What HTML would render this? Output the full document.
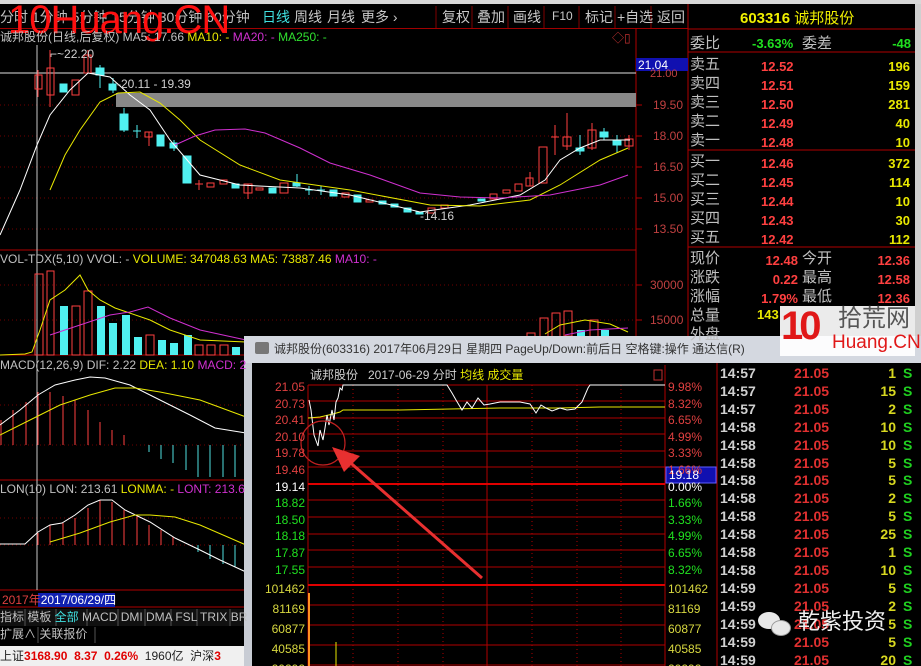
<!DOCTYPE html>
<html><head><meta charset="utf-8"><style>
*{margin:0;padding:0;box-sizing:border-box}
html,body{width:921px;height:666px;overflow:hidden}
body{background:#000;position:relative;font-family:"Liberation Sans","Noto Sans CJK SC",sans-serif;}
.a{position:absolute;white-space:nowrap;line-height:1}
.tb{font-size:14px;color:#c8c8c8}
.rp{font-size:15px}
.g{color:#c0c0c0}.r{color:#ff4040}.y{color:#e8e800}.gr{color:#20e020}
</style></head><body>
<svg class="a" style="left:0;top:0" width="921" height="666">
<rect x="0" y="0" width="921" height="4" fill="#d8d8d8"/>
<rect x="0" y="28" width="688" height="1" fill="#a00000"/>
<line x1="636" y1="28" x2="636" y2="590" stroke="#b00000"/>
<line x1="688" y1="4" x2="688" y2="340" stroke="#b00000"/>
<line x1="688" y1="29" x2="921" y2="29" stroke="#b00000"/>
<line x1="688" y1="52" x2="921" y2="52" stroke="#b00000"/>
<line x1="688" y1="150" x2="921" y2="150" stroke="#b00000"/>
<line x1="688" y1="247" x2="921" y2="247" stroke="#b00000"/>
<rect x="915" y="4" width="6" height="336" fill="#d0d0d0"/>
<g stroke="#800000"><line x1="436" y1="6" x2="436" y2="28"/><line x1="472" y1="6" x2="472" y2="28"/><line x1="508" y1="6" x2="508" y2="28"/><line x1="544" y1="6" x2="544" y2="28"/><line x1="579" y1="6" x2="579" y2="28"/><line x1="615" y1="6" x2="615" y2="28"/><line x1="651" y1="6" x2="651" y2="28"/></g>
<g stroke="#700000" stroke-dasharray="1,3"><line x1="0" y1="105" x2="636" y2="105"/><line x1="0" y1="136" x2="636" y2="136"/><line x1="0" y1="167" x2="636" y2="167"/><line x1="0" y1="198" x2="636" y2="198"/><line x1="0" y1="229" x2="636" y2="229"/><line x1="0" y1="285" x2="636" y2="285"/><line x1="0" y1="320" x2="636" y2="320"/><line x1="0" y1="405" x2="246" y2="405"/><line x1="0" y1="445" x2="246" y2="445"/><line x1="0" y1="518" x2="246" y2="518"/><line x1="0" y1="545" x2="246" y2="545"/></g>
<g stroke="#b00000"><line x1="0" y1="250" x2="636" y2="250"/><line x1="0" y1="355" x2="246" y2="355"/><line x1="0" y1="480" x2="246" y2="480"/><line x1="0" y1="590" x2="246" y2="590"/><line x1="0" y1="607" x2="246" y2="607"/></g>
<g stroke="#b00000"><line x1="636" y1="105" x2="642" y2="105"/><line x1="636" y1="136" x2="642" y2="136"/><line x1="636" y1="167" x2="642" y2="167"/><line x1="636" y1="198" x2="642" y2="198"/><line x1="636" y1="229" x2="642" y2="229"/><line x1="636" y1="285" x2="642" y2="285"/><line x1="636" y1="320" x2="642" y2="320"/></g>
<line x1="0" y1="73" x2="636" y2="73" stroke="#e0e0e0"/>
<rect x="116" y="93" width="520" height="14" fill="#888"/>
<line x1="37" y1="45" x2="37" y2="590" stroke="#c8c8c8"/>
<rect x="636" y="58" width="52" height="13" fill="#1010b0"/>
<g stroke="#ff4040" fill="none" stroke-width="1">
<line x1="38" y1="70" x2="38" y2="97"/><rect x="35" y="75" width="7" height="14"/>
<line x1="50" y1="50" x2="50" y2="107"/><rect x="47" y="68" width="7" height="27"/>
<rect x="72" y="80" width="7" height="15"/>
<line x1="88" y1="50" x2="88" y2="73"/><rect x="84" y="55" width="7" height="18"/>
<line x1="149" y1="132" x2="149" y2="146"/><rect x="145" y="132" width="7" height="5"/>
<line x1="199" y1="180" x2="199" y2="190"/><line x1="195" y1="184" x2="203" y2="184"/>
<rect x="207" y="183" width="7" height="4"/><rect x="220" y="180" width="7" height="4"/>
<line x1="248" y1="184" x2="248" y2="199"/><rect x="244" y="184" width="8" height="9"/>
<rect x="256" y="188" width="7" height="2"/><rect x="280" y="183" width="8" height="10"/>
<rect x="342" y="193" width="7" height="4"/><rect x="366" y="200" width="7" height="2"/>
<rect x="428" y="208" width="7" height="5"/><rect x="441" y="205" width="7" height="3"/>
<rect x="490" y="194" width="7" height="5"/><rect x="503" y="190" width="7" height="3"/>
<rect x="515" y="184" width="7" height="7"/><line x1="530" y1="172" x2="530" y2="186"/><rect x="526" y="178" width="7" height="8"/>
<rect x="539" y="147" width="8" height="36"/><line x1="555" y1="125" x2="555" y2="155"/><line x1="551" y1="137" x2="559" y2="137"/>
<line x1="567" y1="113" x2="567" y2="150"/><rect x="563" y="137" width="8" height="9"/>
<line x1="592" y1="123" x2="592" y2="150"/><rect x="588" y="130" width="8" height="18"/>
<line x1="629" y1="135" x2="629" y2="150"/><rect x="625" y="139" width="8" height="7"/>
</g>
<g fill="#50f0f0" stroke="#50f0f0">
<rect x="60" y="84" width="7" height="8"/>
<line x1="100" y1="65" x2="100" y2="88"/><rect x="96" y="68" width="8" height="7"/>
<line x1="113" y1="78" x2="113" y2="93"/><rect x="109" y="84" width="7" height="6"/>
<line x1="124" y1="108" x2="124" y2="132"/><rect x="120" y="114" width="8" height="16"/>
<line x1="137" y1="125" x2="137" y2="138"/><line x1="133" y1="131" x2="141" y2="131"/>
<rect x="157" y="135" width="7" height="11"/><line x1="174" y1="140" x2="174" y2="151"/><rect x="170" y="143" width="7" height="5"/>
<rect x="183" y="156" width="8" height="27"/><rect x="232" y="184" width="7" height="4"/>
<rect x="269" y="188" width="7" height="5"/><line x1="297" y1="174" x2="297" y2="187"/><rect x="293" y="183" width="7" height="3"/>
<line x1="309" y1="186" x2="309" y2="195"/><line x1="305" y1="190" x2="313" y2="190"/><line x1="321" y1="186" x2="321" y2="195"/><line x1="317" y1="190" x2="325" y2="190"/>
<rect x="330" y="190" width="7" height="6"/><rect x="354" y="195" width="7" height="7"/>
<rect x="379" y="201" width="7" height="3"/><rect x="391" y="204" width="7" height="3"/><rect x="404" y="208" width="7" height="4"/><rect x="416" y="212" width="7" height="2"/>
<rect x="478" y="199" width="7" height="2"/><line x1="580" y1="135" x2="580" y2="155"/><rect x="576" y="148" width="8" height="3"/>
<line x1="604" y1="128" x2="604" y2="140"/><rect x="600" y="132" width="8" height="5"/><line x1="617" y1="135" x2="617" y2="153"/><rect x="613" y="141" width="8" height="4"/>
</g>
<polyline fill="none" stroke="#fff" points="0,235 20,190 37,145 50,115 70,90 88,73 110,77 130,95 150,110 170,140 200,175 240,185 300,188 350,195 420,212 470,205 520,195 545,180 560,160 580,148 600,140 630,140"/>
<polyline fill="none" stroke="#e8e800" points="50,190 65,155 80,130 100,102 118,93 140,92 160,103 180,120 200,140 240,165 280,180 350,190 430,205 480,206 530,200 560,185 600,160 628,148"/>
<polyline fill="none" stroke="#d030d0" points="175,145 195,136 215,130 245,129 265,133 300,148 330,163 370,175 420,193 460,197 500,198 550,195 600,185 628,175"/>
<g stroke="#ff4040" fill="none">
<rect x="35" y="274" width="8" height="81"/><rect x="47" y="271" width="7" height="84"/><rect x="72" y="306" width="8" height="49"/><rect x="84" y="291" width="8" height="64"/>
<rect x="146" y="335" width="8" height="20"/><rect x="195" y="345" width="8" height="10"/><rect x="207" y="345" width="8" height="10"/><rect x="220" y="345" width="8" height="10"/>
<rect x="527" y="333" width="8" height="10"/><rect x="540" y="318" width="8" height="20"/><rect x="552" y="313" width="8" height="25"/><rect x="564" y="311" width="8" height="25"/><rect x="590" y="320" width="8" height="18"/>
</g>
<g fill="#50f0f0"><rect x="60" y="306" width="8" height="49"/><rect x="97" y="306" width="8" height="49"/><rect x="109" y="323" width="8" height="32"/><rect x="122" y="315" width="8" height="40"/><rect x="134" y="337" width="8" height="18"/><rect x="158" y="340" width="8" height="15"/><rect x="170" y="343" width="8" height="12"/><rect x="184" y="335" width="8" height="20"/><rect x="232" y="347" width="8" height="8"/><rect x="577" y="330" width="8" height="8"/><rect x="601" y="330" width="8" height="8"/></g>
<polyline fill="none" stroke="#e8e800" points="0,355 25,354 32,352 40,330 50,300 65,290 80,275 88,290 100,300 115,308 150,320 170,330 200,340 246,342"/>
<polyline fill="none" stroke="#e8e800" points="545,334 560,325 585,320 610,324 628,332"/>
<polyline fill="none" stroke="#d030d0" points="50,335 80,325 110,315 130,312 148,307 170,318 200,330 246,340"/>
<polyline fill="none" stroke="#d030d0" points="565,335 590,330 628,328"/>
<g stroke="#ff4040"><line x1="1" y1="445" x2="1" y2="420"/><line x1="13" y1="445" x2="13" y2="410"/><line x1="26" y1="445" x2="26" y2="402"/><line x1="38" y1="445" x2="38" y2="392"/><line x1="50" y1="445" x2="50" y2="392"/><line x1="63" y1="445" x2="63" y2="396"/><line x1="75" y1="445" x2="75" y2="400"/><line x1="88" y1="445" x2="88" y2="410"/><line x1="100" y1="445" x2="100" y2="422"/><line x1="112" y1="445" x2="112" y2="430"/><line x1="124" y1="445" x2="124" y2="435"/></g>
<g stroke="#50e0e0"><line x1="149" y1="445" x2="149" y2="452"/><line x1="161" y1="445" x2="161" y2="459"/><line x1="173" y1="445" x2="173" y2="463"/><line x1="186" y1="445" x2="186" y2="470"/><line x1="198" y1="445" x2="198" y2="477"/><line x1="210" y1="445" x2="210" y2="477"/><line x1="223" y1="445" x2="223" y2="477"/><line x1="235" y1="445" x2="235" y2="477"/></g>
<polyline fill="none" stroke="#fff" points="0,425 20,410 38,395 55,385 75,380 90,377 105,378 130,385 160,400 190,415 215,428 246,433"/>
<polyline fill="none" stroke="#e8e800" points="0,435 30,420 60,405 90,395 115,388 135,388 160,392 200,400 246,417"/>
<g stroke="#ff4040"><line x1="38" y1="545" x2="38" y2="533"/><line x1="50" y1="545" x2="50" y2="525"/><line x1="63" y1="545" x2="63" y2="523"/><line x1="75" y1="545" x2="75" y2="518"/><line x1="88" y1="545" x2="88" y2="508"/><line x1="100" y1="545" x2="100" y2="500"/><line x1="112" y1="545" x2="112" y2="502"/><line x1="124" y1="545" x2="124" y2="510"/><line x1="137" y1="545" x2="137" y2="516"/><line x1="149" y1="545" x2="149" y2="525"/><line x1="161" y1="545" x2="161" y2="530"/><line x1="173" y1="545" x2="173" y2="537"/></g>
<g stroke="#50e0e0"><line x1="198" y1="545" x2="198" y2="552"/><line x1="210" y1="545" x2="210" y2="559"/><line x1="223" y1="545" x2="223" y2="564"/><line x1="235" y1="545" x2="235" y2="567"/></g>
<polyline fill="none" stroke="#fff" points="0,544 25,544 38,532 50,525 62,523 75,515 88,505 100,500 112,500 125,510 150,522 175,538 200,550 220,560 246,572"/>
<polyline fill="none" stroke="#e8e800" points="50,542 80,533 110,522 135,515 150,515 175,517 200,525 230,538 246,545"/>
<rect x="38" y="593" width="77" height="14" fill="#1020b0"/>
<rect x="0" y="609" width="246" height="17" fill="#101010"/>
<g stroke="#555"><line x1="25" y1="609" x2="25" y2="626"/><line x1="56" y1="609" x2="56" y2="626"/><line x1="87" y1="609" x2="87" y2="626"/><line x1="118" y1="609" x2="118" y2="626"/><line x1="145" y1="609" x2="145" y2="626"/><line x1="171" y1="609" x2="171" y2="626"/><line x1="197" y1="609" x2="197" y2="626"/><line x1="230" y1="609" x2="230" y2="626"/><line x1="38" y1="627" x2="38" y2="643"/><line x1="95" y1="627" x2="95" y2="643"/></g>
<rect x="0" y="646" width="246" height="20" fill="#f0f0f0"/>
<rect x="244" y="336" width="677" height="330" fill="#c8ccd4"/>
<rect x="244" y="336" width="677" height="27" fill="#d4d8e0"/>
<rect x="252" y="363" width="669" height="303" fill="#000"/>
<g stroke="#b00000">
<line x1="308" y1="385" x2="665" y2="385"/><line x1="308" y1="401" x2="665" y2="401"/><line x1="308" y1="418" x2="665" y2="418"/><line x1="308" y1="434" x2="665" y2="434"/><line x1="308" y1="451" x2="665" y2="451"/><line x1="308" y1="467" x2="665" y2="467"/><line x1="308" y1="500" x2="665" y2="500"/><line x1="308" y1="517" x2="665" y2="517"/><line x1="308" y1="534" x2="665" y2="534"/><line x1="308" y1="550" x2="665" y2="550"/><line x1="308" y1="567" x2="665" y2="567"/><line x1="308" y1="605" x2="665" y2="605"/><line x1="308" y1="625" x2="665" y2="625"/><line x1="308" y1="645" x2="665" y2="645"/><line x1="308" y1="665" x2="665" y2="665"/>
<line x1="308" y1="385" x2="308" y2="666"/><line x1="665" y1="365" x2="665" y2="666"/><line x1="487" y1="385" x2="487" y2="666"/><line x1="717" y1="363" x2="717" y2="666"/>
</g>
<g stroke="#b00000" stroke-dasharray="1,3"><line x1="353" y1="385" x2="353" y2="666"/><line x1="398" y1="385" x2="398" y2="666"/><line x1="443" y1="385" x2="443" y2="666"/><line x1="532" y1="385" x2="532" y2="666"/><line x1="577" y1="385" x2="577" y2="666"/><line x1="621" y1="385" x2="621" y2="666"/></g>
<line x1="308" y1="484" x2="665" y2="484" stroke="#e00000" stroke-width="2"/>
<line x1="308" y1="585" x2="665" y2="585" stroke="#e00000" stroke-width="2"/>
<rect x="666" y="467" width="50" height="16" fill="#1010b0" stroke="#6060ff"/>
<rect x="654" y="370" width="8" height="10" fill="none" stroke="#c03030"/>
<polyline fill="none" stroke="#e8e800" points="308,418 320,417 333,414 340,412 343,410 400,410 450,409 500,408 560,408 600,407 665,407"/>
<polyline fill="none" stroke="#fff" points="309,400 311,410 314,435 318,446 320,430 323,440 325,428 327,415 329,425 332,410 334,420 336,402 338,398 340,388 342,390 343,385 447,385 452,393 456,400 462,410 467,402 472,408 478,398 484,405 490,404 500,402 520,402 530,404 536,413 541,405 546,408 552,411 560,408 567,410 575,409 582,402 588,388 590,385 665,385"/>
<circle cx="323" cy="443" r="22" fill="none" stroke="#c02020" stroke-width="1.2"/>
<line x1="482" y1="578" x2="345" y2="458" stroke="#e83030" stroke-width="3"/>
<polygon points="332,447 360,456 344,472" fill="#e83030"/>
<line x1="309" y1="593" x2="309" y2="666" stroke="#ff9020" stroke-width="2"/>
<line x1="336" y1="642" x2="336" y2="666" stroke="#e8e800"/>
<rect x="255" y="342" width="14" height="12" fill="#777" rx="2"/>
</svg>

<div class="a tb" style="left:0;top:10px;color:#c0c0c0">分时 1分钟 5分钟 15分钟 30分钟 60分钟</div>
<div class="a" style="left:8px;top:0px;font-size:40px;color:#ff1010;letter-spacing:-1px">10Huang.CN</div>
<div class="a tb" style="left:262px;top:10px;color:#40e0e0">日线</div>
<div class="a tb" style="left:294px;top:10px">周线</div>
<div class="a tb" style="left:327px;top:10px">月线</div>
<div class="a tb" style="left:361px;top:10px">更多 ›</div>
<div class="a tb" style="left:442px;top:10px">复权</div>
<div class="a tb" style="left:477px;top:10px">叠加</div>
<div class="a tb" style="left:513px;top:10px">画线</div>
<div class="a tb" style="left:552px;top:10px;font-size:12px">F10</div>
<div class="a tb" style="left:585px;top:10px">标记</div>
<div class="a tb" style="left:617px;top:10px">+自选</div>
<div class="a tb" style="left:657px;top:10px">返回</div>
<div class="a" style="left:740px;top:11px;font-size:15px;color:#f0f000;font-weight:bold">603316 <span style="font-weight:normal">诚邦股份</span></div>
<div class="a" style="left:0;top:31px;font-size:12px;color:#c0c0c0">诚邦股份(日线,后复权) MA5: 17.66 <span class="y">MA10: -</span> <span style="color:#d030d0">MA20: -</span> <span style="color:#30e030">MA250: -</span></div>
<div class="a" style="left:50px;top:48px;font-size:12px;color:#d0d0d0">⌐~22.20</div>
<div class="a" style="left:117px;top:78px;font-size:12px;color:#d0d0d0">-20.11 - 19.39</div>
<div class="a" style="left:420px;top:210px;font-size:12px;color:#d0d0d0">-14.16</div>
<div class="a" style="left:638px;top:59px;font-size:12px;color:#fff">21.04</div>
<div class="a" style="left:650px;top:69px;font-size:11px;color:#c04040">21.00</div>
<div class="a" style="left:653px;top:99px;font-size:12px;color:#c04040">19.50</div>
<div class="a" style="left:653px;top:130px;font-size:12px;color:#c04040">18.00</div>
<div class="a" style="left:653px;top:161px;font-size:12px;color:#c04040">16.50</div>
<div class="a" style="left:653px;top:192px;font-size:12px;color:#c04040">15.00</div>
<div class="a" style="left:653px;top:223px;font-size:12px;color:#c04040">13.50</div>
<div class="a" style="left:650px;top:279px;font-size:12px;color:#c04040">30000</div>
<div class="a" style="left:650px;top:314px;font-size:12px;color:#c04040">15000</div>
<div class="a" style="left:612px;top:32px;font-size:12px;color:#c03030">◇▯</div>
<div class="a" style="left:0;top:253px;font-size:12px;color:#c0c0c0">VOL-TDX(5,10) VVOL: - <span class="y">VOLUME: 347048.63</span> <span class="y">MA5: 73887.46</span> <span style="color:#d030d0">MA10: -</span></div>
<div class="a" style="left:0;top:359px;font-size:12px;color:#c0c0c0">MACD(12,26,9) DIF: 2.22 <span class="y">DEA: 1.10</span> <span style="color:#d030d0">MACD: 2</span></div>
<div class="a" style="left:0;top:483px;font-size:12px;color:#c0c0c0">LON(10) LON: 213.61 <span class="y">LONMA: -</span> <span style="color:#d030d0">LONT: 213.6</span></div>
<div class="a" style="left:2px;top:594px;font-size:12px;color:#e04040">2017年<span style="color:#fff">2017/06/29/四</span></div>
<div class="a" style="left:0;top:611px;font-size:12px;color:#c0c0c0">指标 模板 <span style="color:#40e0e0">全部</span> MACD  DMI  DMA  FSL  TRIX  BR</div>
<div class="a" style="left:0;top:628px;font-size:12px;color:#c0c0c0">扩展∧ 关联报价</div>
<div class="a" style="left:0;top:650px;font-size:12px;color:#222">上证<b style="color:#e00000">3168.90</b>&nbsp;&nbsp;<b style="color:#e00000">8.37</b>&nbsp;&nbsp;<b style="color:#e00000">0.26%</b>&nbsp;&nbsp;1960亿&nbsp;&nbsp;沪深<b style="color:#e00000">3</b></div>
<div class="a rp g" style="left:690px;top:36px">委比</div>
<div class="a rp gr" style="left:752px;top:37px;font-weight:bold;font-size:13px">-3.63%</div>
<div class="a rp g" style="left:802px;top:36px">委差</div>
<div class="a rp gr" style="left:885px;top:37px;font-weight:bold;font-size:13px;width:26px;text-align:right">-48</div>
<div class="a rp g" style="left:690px;top:55px;line-height:19px">卖五<br>卖四<br>卖三<br>卖二<br>卖一</div>
<div class="a rp r" style="left:761px;top:57px;line-height:19px;font-weight:bold;font-size:13px">12.52<br>12.51<br>12.50<br>12.49<br>12.48</div>
<div class="a rp y" style="left:860px;top:57px;width:50px;text-align:right;line-height:19px;font-weight:bold;font-size:13px">196<br>159<br>281<br>40<br>10</div>
<div class="a rp g" style="left:690px;top:152px;line-height:19px">买一<br>买二<br>买三<br>买四<br>买五</div>
<div class="a rp r" style="left:761px;top:154px;line-height:19px;font-weight:bold;font-size:13px">12.46<br>12.45<br>12.44<br>12.43<br>12.42</div>
<div class="a rp y" style="left:860px;top:154px;width:50px;text-align:right;line-height:19px;font-weight:bold;font-size:13px">372<br>114<br>10<br>30<br>112</div>
<div class="a rp g" style="left:690px;top:249px;line-height:19px">现价<br>涨跌<br>涨幅<br>总量<br>外盘</div>
<div class="a rp r" style="left:740px;top:251px;width:58px;text-align:right;line-height:19px;font-weight:bold;font-size:13px">12.48<br>0.22<br>1.79%</div>
<div class="a rp y" style="left:757px;top:308px;font-weight:bold;font-size:13px">143</div>
<div class="a rp g" style="left:802px;top:249px;line-height:19px">今开<br>最高<br>最低</div>
<div class="a rp r" style="left:860px;top:251px;width:50px;text-align:right;line-height:19px;font-weight:bold;font-size:13px">12.36<br>12.58<br>12.36</div>
<div class="a" style="left:780px;top:306px;width:135px;height:50px;background:#fff;opacity:.92"></div>
<div class="a" style="left:781px;top:306px;font-size:40px;color:#e01818;font-weight:bold;letter-spacing:-4px">10</div>
<div class="a" style="left:838px;top:307px;font-size:24px;color:#555">拾荒网</div>
<div class="a" style="left:832px;top:333px;font-size:19px;color:#e01818">Huang.CN</div>
<div class="a" style="left:274px;top:343px;font-size:12px;color:#333">诚邦股份(603316) 2017年06月29日 星期四 PageUp/Down:前后日 空格键:操作 通达信(R)</div>
<div class="a" style="left:310px;top:369px;font-size:12px;color:#d0d0d0">诚邦股份&nbsp;&nbsp;&nbsp;2017-06-29 分时 <span class="y">均线 成交量</span></div>
<div class="a" style="left:260px;top:379px;width:45px;text-align:right;font-size:12px;line-height:16.6px;color:#e04040">21.05<br>20.73<br>20.41<br>20.10<br>19.78<br>19.46<br><span style="color:#fff">19.14</span><br><span class="gr">18.82<br>18.50<br>18.18<br>17.87<br>17.55</span></div>
<div class="a" style="left:258px;top:579px;width:47px;text-align:right;font-size:12px;line-height:20px;color:#d8d840">101462<br>81169<br>60877<br>40585<br>20292</div>
<div class="a" style="left:668px;top:379px;font-size:12px;line-height:16.6px;color:#e04040">9.98%<br>8.32%<br>6.65%<br>4.99%<br>3.33%<br>1.66%<br><span style="color:#fff">0.00%</span><br><span class="gr">1.66%<br>3.33%<br>4.99%<br>6.65%<br>8.32%</span></div>
<div class="a" style="left:668px;top:579px;font-size:12px;line-height:20px;color:#d8d840">101462<br>81169<br>60877<br>40585<br>20292</div>
<div class="a" style="left:669px;top:469px;font-size:12px;color:#fff">19.18</div>
<div class="a" style="left:720px;top:365px;font-size:14px;line-height:17.9px;color:#d0d0d0;font-weight:bold">14:57<br>14:57<br>14:57<br>14:58<br>14:58<br>14:58<br>14:58<br>14:58<br>14:58<br>14:58<br>14:58<br>14:58<br>14:59<br>14:59<br>14:59<br>14:59<br>14:59</div>
<div class="a" style="left:794px;top:365px;font-size:14px;line-height:17.9px;color:#e03030;font-weight:bold">21.05<br>21.05<br>21.05<br>21.05<br>21.05<br>21.05<br>21.05<br>21.05<br>21.05<br>21.05<br>21.05<br>21.05<br>21.05<br>21.05<br>21.05<br>21.05<br>21.05</div>
<div class="a" style="left:866px;top:365px;width:30px;text-align:right;font-size:14px;line-height:17.9px;color:#d8d820;font-weight:bold">1<br>15<br>2<br>10<br>10<br>5<br>5<br>2<br>5<br>25<br>1<br>10<br>5<br>2<br>5<br>5<br>20</div>
<div class="a" style="left:903px;top:365px;font-size:14px;line-height:17.9px;color:#20d020;font-weight:bold">S<br>S<br>S<br>S<br>S<br>S<br>S<br>S<br>S<br>S<br>S<br>S<br>S<br>S<br>S<br>S<br>S</div>
<div class="a" style="left:758px;top:612px;width:22px;height:17px;border-radius:50%;background:#e8e8e8"></div>
<div class="a" style="left:771px;top:620px;width:20px;height:16px;border-radius:50%;background:#e8e8e8;border:1px solid #999"></div>
<div class="a" style="left:798px;top:611px;font-size:22px;color:#f0f0f0">乾紫投资</div>
</body></html>
